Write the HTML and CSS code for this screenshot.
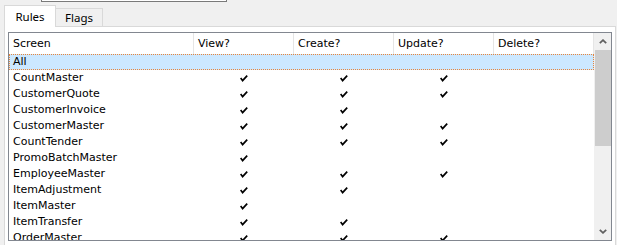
FILE: index.html
```html
<!DOCTYPE html>
<html lang="en">
<head>
  <meta charset="UTF-8">
  <title>Security Rules</title>
  <link rel="stylesheet" href="styles.css">
</head>
<body>
  <div class="topbox"></div>

  <div class="tabs">
    <div class="tab active">Rules</div>
    <div class="tab">Flags</div>
  </div>

  <div class="panel">
    <div class="list">
      <div class="grid">
        <div class="head">
          <div class="col first">Screen</div>
          <div class="col">View?</div>
          <div class="col">Create?</div>
          <div class="col">Update?</div>
          <div class="col">Delete?</div>
        </div>
        <div class="rows" id="rows"></div>
      </div>
      <div class="scrollbar">
        <div class="arrow">
          <svg width="8" height="5" viewBox="0 0 8 5"><polyline points="0.8,4.2 4,1.2 7.2,4.2" fill="none" stroke="#606060" stroke-width="1.8"/></svg>
        </div>
        <div class="thumb"></div>
        <div class="track"></div>
        <div class="arrow">
          <svg width="8" height="5" viewBox="0 0 8 5"><polyline points="0.8,0.8 4,3.8 7.2,0.8" fill="none" stroke="#606060" stroke-width="1.8"/></svg>
        </div>
      </div>
    </div>
  </div>

  <script>
    // screen name, view, create, update, delete
    const rules = [
      ['All', 0, 0, 0, 0],
      ['CountMaster', 1, 1, 1, 0],
      ['CustomerQuote', 1, 1, 1, 0],
      ['CustomerInvoice', 1, 1, 0, 0],
      ['CustomerMaster', 1, 1, 1, 0],
      ['CountTender', 1, 1, 1, 0],
      ['PromoBatchMaster', 1, 0, 0, 0],
      ['EmployeeMaster', 1, 1, 1, 0],
      ['ItemAdjustment', 1, 1, 0, 0],
      ['ItemMaster', 1, 0, 0, 0],
      ['ItemTransfer', 1, 1, 0, 0],
      ['OrderMaster', 1, 1, 1, 0]
    ];

    const check = '<svg width="8" height="7" viewBox="0 0 8 7"><polyline points="0.6,3 2.6,5.6 7.2,0.6" fill="none" stroke="#000" stroke-width="1.7"/></svg>';

    const rowsDiv = document.getElementById('rows');
    rules.forEach((r, i) => {
      const row = document.createElement('div');
      row.className = 'row' + (i === 0 ? ' selected' : '');
      let html = '<div class="cell first">' + r[0] + '</div>';
      for (let c = 1; c < 5; c++) {
        html += '<div class="cell mark">' + (r[c] ? check : '') + '</div>';
      }
      row.innerHTML = html;
      rowsDiv.appendChild(row);
    });
  </script>
</body>
</html>
```

FILE: styles.css
```css
body {
  margin: 0;
  background-color: #f0f0f0;
  font-family: "DejaVu Sans", sans-serif;
  font-size: 11px;
  color: #000;
  height: 245px;
  overflow: hidden;
}
.topbox {
  margin-left: 41px;
  width: 184px;
  height: 1px;
  background-color: #fff;
  border: 1px solid #7a7a7a;
  border-top: none;
}
.tabs {
  display: flex;
  align-items: flex-end;
  margin-top: 3px;
  padding-left: 4px;
  font-family: "Noto Sans", sans-serif;
  font-size: 11.5px;
  line-height: 15px;
}
.tab {
  width: 46px;
  height: 16px;
  padding-top: 1px;
  text-align: center;
  background-color: #f0f0f0;
  border: 1px solid #d9d9d9;
  border-left: none;
  border-bottom: none;
}
.tab.active {
  width: 50px;
  height: 18px;
  padding-top: 3px;
  background-color: #fff;
  border-left: 1px solid #d9d9d9;
  margin-bottom: -1px;
  position: relative;
  z-index: 1;
}
.panel {
  margin: 0 1px 0 4px;
  height: 212px;
  padding: 5px 3px 3px 3px;
  background-color: #fff;
  border: 1px solid #d9d9d9;
}
.list {
  display: grid;
  grid-template-columns: 585px 17px;
  height: 207px;
  border: 1px solid #828790;
  overflow: hidden;
}
.grid {
  display: flex;
  flex-direction: column;
  overflow: hidden;
}
.head {
  display: grid;
  grid-template-columns: 185px 100px 100px 100px 100px;
  height: 21px;
  line-height: 21px;
}
.col {
  padding-left: 4px;
  border-right: 1px solid #e5e5e5;
}
.rows {
  flex: 1;
  overflow: hidden;
}
.row {
  display: grid;
  grid-template-columns: 185px 100px 100px 100px 100px;
  height: 16px;
  line-height: 16px;
}
.row.selected {
  background-color: #cce8ff;
  outline: 1px dotted #e8853a;
  outline-offset: -1px;
}
.cell.first {
  padding-left: 4px;
  white-space: nowrap;
}
.cell.mark {
  display: flex;
  align-items: center;
  justify-content: center;
}
.scrollbar {
  display: flex;
  flex-direction: column;
  background-color: #f0f0f0;
  padding-left: 1px;
}
.arrow {
  height: 17px;
  display: flex;
  align-items: center;
  justify-content: center;
}
.thumb {
  height: 96px;
  background-color: #cdcdcd;
}
.track {
  flex: 1;
}
```
